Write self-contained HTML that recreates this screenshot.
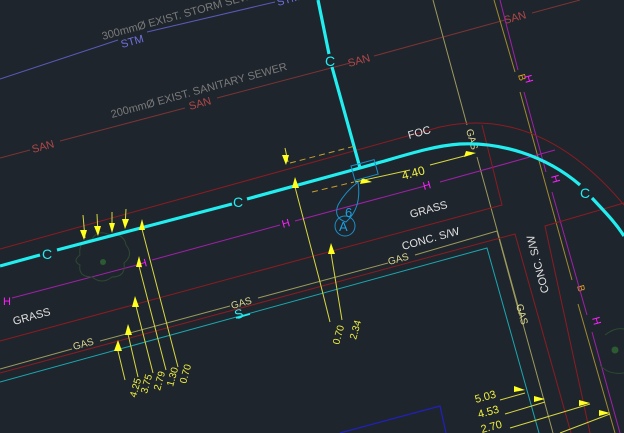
<!DOCTYPE html>
<html><head><meta charset="utf-8"><style>
html,body{margin:0;padding:0;background:#1f252d;overflow:hidden}
svg{display:block}
text{font-family:"Liberation Sans",sans-serif}
</style></head><body>
<svg width="624" height="433" viewBox="0 0 624 433" xmlns="http://www.w3.org/2000/svg">
<rect width="624" height="433" fill="#1f252d"/>
<g stroke="#5a5ab8" stroke-width="1" fill="none">
<path d="M0,79 L118,40 M147,32 L275,2"/>
</g>
<text x="122" y="48" fill="#7070e0" font-size="11" transform="rotate(-15.4 122 48)">STM</text>
<text x="278" y="6" fill="#7070e0" font-size="11" transform="rotate(-15.4 278 6)">STM</text>
<text x="103" y="40" fill="#7a7a7a" font-size="11" transform="rotate(-15.4 103 40)">300mmØ EXIST. STORM SEWER</text>
<g stroke="#7a3434" stroke-width="1" fill="none">
<path d="M0,158 L30,150 M60,141 L185,108 M217,98 L350,63 M374,56 L505,20 M532,13 L580,0"/>
</g>
<text x="33" y="153" fill="#b04848" font-size="11" transform="rotate(-15.4 33 153)">SAN</text>
<text x="190" y="110" fill="#b04848" font-size="11" transform="rotate(-15.4 190 110)">SAN</text>
<text x="349" y="67" fill="#b04848" font-size="11" transform="rotate(-15.4 349 67)">SAN</text>
<text x="505" y="24" fill="#b04848" font-size="11" transform="rotate(-15.4 505 24)">SAN</text>
<text x="112" y="118" fill="#7a7a7a" font-size="11" transform="rotate(-15.4 112 118)">200mmØ EXIST. SANITARY SEWER</text>
<g stroke="#9c9a5c" stroke-width="1" fill="none">
<path d="M433,0 L467,125 M477,157 L553,433"/>
<path d="M0,369 L72,349 M100,341 L230,306 M258,298 L388,263 M415,255 L497,231 L520,316"/>
</g>
<g stroke="#a08a30" stroke-width="1" fill="none">
<path d="M494,0 L515,72 M520,92 L572,280 M578,304 L615,433"/>
</g>
<text x="0" y="0" fill="#e0a020" font-size="10" transform="translate(518,75) rotate(74.6)">B</text>
<text x="0" y="0" fill="#e0a020" font-size="10" transform="translate(577,286) rotate(74.6)">B</text>
<text x="0" y="0" fill="#ddd890" font-size="10" transform="translate(466,130) rotate(74.6)">GAS</text>
<text x="0" y="0" fill="#ddd890" font-size="10" transform="translate(516,305) rotate(74.6)">GAS</text>
<text x="74" y="350" fill="#ddd890" font-size="10" transform="rotate(-15.4 74 350)">GAS</text>
<text x="232" y="309" fill="#ddd890" font-size="10" transform="rotate(-15.4 232 309)">GAS</text>
<text x="389" y="265" fill="#ddd890" font-size="10" transform="rotate(-15.4 389 265)">GAS</text>
<g stroke="#a020a8" stroke-width="1" fill="none">
<path d="M500,0 L518,70 M524,92 L546,172 M552,192 L587,315 M592,332 L620,433"/>
<path d="M12,298 L137,265 M152,260 L280,225 M295,221 L425,186 M440,182 L555,150"/>
</g>
<g fill="#ff20ff" font-size="11">
<text x="0" y="0" transform="translate(524,76) rotate(74.6)">H</text>
<text x="0" y="0" transform="translate(551,176) rotate(74.6)">H</text>
<text x="0" y="0" transform="translate(592,318) rotate(74.6)">H</text>
<text x="3" y="305">H</text>
<text x="140" y="268" transform="rotate(-15.4 140 268)">H</text>
<text x="283" y="228" transform="rotate(-15.4 283 228)">H</text>
<text x="424" y="190" transform="rotate(-15.4 424 190)">H</text>
</g>
<g stroke="#8c1c22" stroke-width="1" fill="none">
<path d="M0,249 L440,127 Q540,105 624,205"/>
<path d="M0,341 L502,205 L482,125"/>
<path d="M0,373 L515,234 L571,433"/>
<path d="M590,433 L545,226 L624,203"/>
</g>
<path d="M0,382 L487,248 L539,433" stroke="#1aa8b0" stroke-width="1" fill="none"/>
<path d="M340,433 L440,406 L446,433" stroke="#2020c0" stroke-width="1.2" fill="none"/>
<g stroke="#2c4a30" stroke-width="1" fill="none">
<path d="M80,255 q-2,-14 12,-16 q6,-10 18,-4 q14,-2 16,10 q8,10 -2,18 q2,14 -12,14 q-10,8 -20,0 q-14,0 -12,-12 q-8,-4 0,-10z"/>
<path d="M605,335 q10,-8 19,-6 M600,365 q8,10 24,8"/>
</g>
<circle cx="103" cy="262" r="3" fill="#2c5a32"/>
<circle cx="615" cy="350" r="3.5" fill="#2c5a32"/>
<g stroke="#22eef0" stroke-width="3.2" fill="none">
<path d="M0,266 L40,255 M57,250 L232,204 M247,199 L360,168 C400,157 430,146 460,144 C500,142 545,155 580,185"/>
<path d="M592,198 C605,212 615,222 624,236"/>
<path d="M318,0 L329,54 M332,67 L360,168"/>
</g>
<g fill="#22eef0" font-size="14">
<text x="42" y="259">C</text>
<text x="233" y="207">C</text>
<text x="325" y="66">C</text>
<text x="580" y="198">C</text>
</g>
<text x="234" y="318" fill="#22eef0" font-size="13" transform="rotate(-15.4 240 312)">S</text>
<path d="M236,318 L250,314" stroke="#22eef0" stroke-width="1.5"/>
<g stroke="#d8d840" stroke-width="1" fill="none">
<path d="M118,351 L125,380 M128,334 L138,377 M136,306 L153,373 M139,266 L166,370 M142,229 L178,367"/>
<path d="M295,187 L320,282 L330,322 M331,253 L342,320"/>
<path d="M83,215 L85,238 M97,214 L98,234 M112,212 L112,230 M126,209 L125,227"/>
<path d="M285,148 L288,162 M355,182 L410,170 M430,165 L472,154"/>
<path d="M500,400 L525,393 M505,414 L545,402 M510,428 L590,404 M560,433 L610,414"/>
</g>
<g stroke="#c8a030" stroke-width="1" stroke-dasharray="6 4" fill="none">
<path d="M290,163 L355,146 M312,192 L354,182"/>
</g>
<g fill="#ffff20">
<path d="M114,351 L118,340 L122,351z M125,335 L128,324 L132,335z M132,307 L135,296 L139,307z M136,267 L139,256 L142,267z M139,230 L142,219 L145,230z"/>
<path d="M292,188 L295,177 L299,188z M328,254 L331,243 L335,254z"/>
<path d="M80,230 L84,240 L87,230z M94,226 L98,236 L101,226z M109,223 L112,233 L115,223z M122,219 L125,229 L129,219z M282,155 L286,165 L289,155z"/>
<path d="M464,157 L476,153 L466,151z M360,184 L372,182 L362,178z"/>
<path d="M514,392 L525,390 L514,386z M534,402 L545,399 L534,396z M579,406 L590,403 L579,400z M599,416 L610,413 L599,410z"/>
</g>
<g fill="#f0f040" font-size="10">
<text x="0" y="0" transform="translate(136,398) rotate(-74.6)">4.25</text>
<text x="0" y="0" transform="translate(147,394) rotate(-74.6)">3.75</text>
<text x="0" y="0" transform="translate(160,391) rotate(-74.6)">2.79</text>
<text x="0" y="0" transform="translate(173,387) rotate(-74.6)">1.30</text>
<text x="0" y="0" transform="translate(186,384) rotate(-74.6)">0.70</text>
<text x="0" y="0" transform="translate(339,345) rotate(-74.6)">0.70</text>
<text x="0" y="0" transform="translate(356,340) rotate(-74.6)">2.34</text>
<text x="476" y="403" font-size="11" transform="rotate(-15.4 476 403)">5.03</text>
<text x="479" y="418" font-size="11" transform="rotate(-15.4 479 418)">4.53</text>
<text x="482" y="433" font-size="11" transform="rotate(-15.4 482 433)">2.70</text>
<text x="403" y="180" font-size="12" transform="rotate(-15.4 403 180)">4.40</text>
</g>
<g fill="#e0e0e0" font-size="11">
<text x="14" y="325" transform="rotate(-15.4 14 325)">GRASS</text>
<text x="411" y="218" transform="rotate(-15.4 411 218)">GRASS</text>
<text x="403" y="250" transform="rotate(-15.4 403 250)">CONC. S/W</text>
<text x="409" y="139" transform="rotate(-15.4 409 139)">FOC</text>
<text x="0" y="0" transform="translate(549,292) rotate(-105)">CONC. S/W</text>
</g>
<g stroke="#1a90c8" stroke-width="1" fill="none">
<path d="M358,182 Q362,208 346,222 Q333,218 338,205 Q345,192 358,182z"/>
<circle cx="345" cy="226" r="10"/>
<rect x="351" y="166" width="24" height="15" transform="rotate(-15.4 351 166)"/>
</g>
<text x="345" y="217" fill="#1aa0e0" font-size="13">6</text>
<text x="339" y="231" fill="#1aa0e0" font-size="13">A</text>
</svg>
</body></html>
